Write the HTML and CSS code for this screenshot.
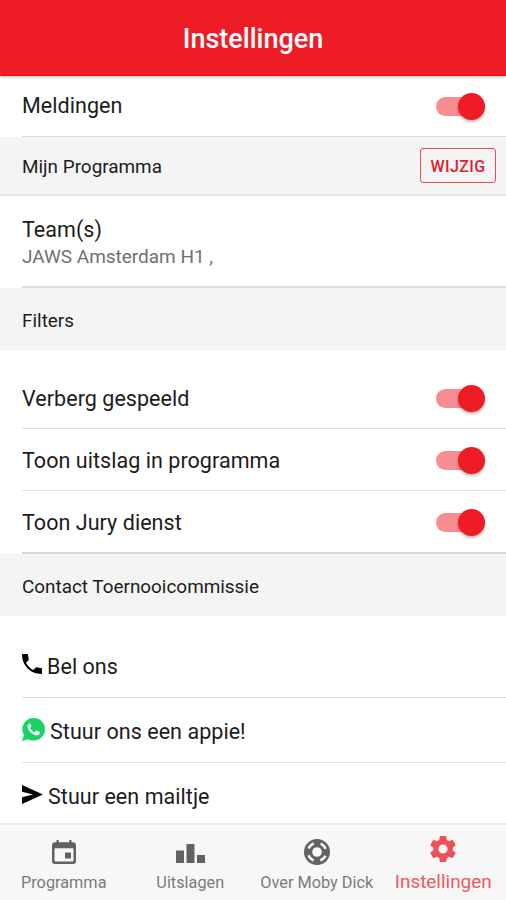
FILE: index.html
```html
<!DOCTYPE html>
<html lang="nl">
<head>
<meta charset="utf-8">
<title>Instellingen</title>
<link rel="stylesheet" href="styles.css">
</head>
<body>
<div class="app">
  <header class="header"><h1>Instellingen</h1></header>
  <main class="content">
    <div class="row first"><span>Meldingen</span><span class="toggle"></span></div>
    <div class="section mine"><span>Mijn Programma</span><button class="change">WIJZIG</button></div>
    <div class="row team"><div><div>Team(s)</div><div class="sub">JAWS Amsterdam H1 ,</div></div></div>
    <div class="section"><span>Filters</span></div>
    <div class="list filters">
      <div class="row"><span>Verberg gespeeld</span><span class="toggle"></span></div>
      <div class="row"><span>Toon uitslag in programma</span><span class="toggle"></span></div>
      <div class="row last"><span>Toon Jury dienst</span><span class="toggle"></span></div>
    </div>
    <div class="section contact"><span>Contact Toernooicommissie</span></div>
    <div class="list links">
      <div class="row"><svg class="phone" viewBox="3 3 18 18"><path d="M6.62 10.79c1.44 2.83 3.76 5.14 6.59 6.59l2.2-2.2c.27-.27.67-.36 1.02-.24 1.12.37 2.33.57 3.57.57.55 0 1 .45 1 1V20c0 .55-.45 1-1 1C10.61 21 3 13.39 3 4c0-.55.45-1 1-1h3.5c.55 0 1 .45 1 1 0 1.25.2 2.45.57 3.57.11.35.03.74-.25 1.02l-2.2 2.2z"/></svg><span>Bel ons</span></div>
      <div class="row"><svg class="whatsapp" viewBox="0 0 24 24"><path fill="#1bd263" d="M12.2 0A11.8 11.8 0 0 1 24 11.8 11.8 11.8 0 0 1 12.2 23.6c-2.1 0-4-.5-5.7-1.5L0 24l1.9-6.3A11.8 11.8 0 0 1 12.2 0z"/><path fill="#fff" d="M8.2 5.8c-.5 0-1 .2-1.4.7-.6.6-1.1 1.5-1 2.7.2 2 1.7 4.2 3.5 5.9 2 1.9 4.3 3 6.2 3 1.5-.1 2.7-.9 3-2 .2-.7.2-1.3 0-1.5l-3.1-1.5c-.4-.2-.7-.1-1 .3l-.9 1.2c-.2.3-.5.3-.9.1-1.7-.8-3.1-2.1-4-3.7-.2-.3-.1-.6.1-.8l.8-1.1c.2-.3.2-.5.1-.8L8.8 6.2c-.1-.3-.3-.4-.6-.4z"/></svg><span>Stuur ons een appie!</span></div>
      <div class="row"><svg class="send" viewBox="2 3 21 18" preserveAspectRatio="none"><path d="M2 21 23 12 2 3v6.500l11 2.500-11 2.500z"/></svg><span>Stuur een mailtje</span></div>
    </div>
  </main>
  <nav class="tabs">
    <div class="tab"><svg viewBox="0 0 26 26"><path fill-rule="evenodd" d="M5.500 1h2.200v2.200h10.600V1h2.200v2.200H22a3 3 0 0 1 3 3V22a3 3 0 0 1-3 3H4a3 3 0 0 1-3-3V6.200a3 3 0 0 1 3-3h1.500zM3.500 9.200v12.400a1 1 0 0 0 1 1h17a1 1 0 0 0 1-1V9.200zM14 13.500h6v6h-6z"/></svg><span>Programma</span></div>
    <div class="tab"><svg class="bars" viewBox="0 0 29 19"><path d="M0 6.500h8V19H0zM10.500 0h8v19h-8zM21 11h8v8h-8z"/></svg><span>Uitslagen</span></div>
    <div class="tab"><svg viewBox="0 0 26 26"><circle cx="13" cy="13" r="13"/><circle cx="13" cy="13" r="4.800" fill="#f7f7f7"/><circle cx="13" cy="13" r="9.100" fill="none" stroke="#f7f7f7" stroke-width="2.600" stroke-dasharray="7.400 6.894" stroke-dashoffset="3.700" transform="rotate(45 13 13)"/></svg><span>Over Moby Dick</span></div>
    <div class="tab active"><svg viewBox="2 2 20 20"><path d="M19.430 12.980c.04-.32.07-.64.07-.98s-.03-.66-.07-.98l2.110-1.650c.19-.15.24-.42.12-.64l-2-3.460c-.12-.22-.39-.3-.61-.22l-2.490 1c-.52-.4-1.080-.73-1.690-.98l-.38-2.650C14.460 2.180 14.250 2 14 2h-4c-.25 0-.46.18-.49.42l-.38 2.650c-.61.25-1.170.59-1.690.98l-2.490-1c-.23-.09-.49 0-.61.22l-2 3.460c-.13.22-.07.49.12.64l2.110 1.650c-.04.32-.07.65-.07.98s.03.66.07.98l-2.110 1.650c-.19.15-.24.42-.12.64l2 3.460c.12.22.39.3.61.22l2.490-1c.52.4 1.080.73 1.690.98l.38 2.650c.03.24.24.42.49.42h4c.25 0 .46-.18.49-.42l.38-2.650c.61-.25 1.170-.59 1.690-.98l2.490 1c.23.09.49 0 .61-.22l2-3.460c.12-.22.07-.49-.12-.64zM12 15.500a3.500 3.500 0 1 1 0-7 3.500 3.500 0 0 1 0 7z"/></svg><span>Instellingen</span></div>
  </nav>
</div>
</body>
</html>
```
FILE: styles.css
```css
* { box-sizing: border-box; }
body { margin: 0; background: #fff; font-family: Roboto, sans-serif; color: #1c1c1c; }
.app { display: flex; flex-direction: column; height: 900px; overflow: hidden; }
.header { flex: none; height: 76px; display: flex; align-items: center; justify-content: center; background: #ee1c25; border-bottom: 1px solid #e80d14; box-shadow: 0 1px 3px rgba(0,0,0,.3); z-index: 1; }
h1 { margin: 2px 0 0; font-size: 27px; line-height: 32px; font-weight: 500; color: #fff; }
.content { flex: 1; min-height: 0; overflow: hidden; }
.row { display: flex; align-items: center; height: 62px; margin-left: 22px; padding: 2px 21px 0 0; border-bottom: 1px solid #dedede; font-size: 21.500px; line-height: 26px; letter-spacing: .05px; }
.first { height: 61px; padding-top: 0; }
.toggle { display: block; position: relative; width: 49px; height: 19px; margin-left: auto; border-radius: 10px; background: linear-gradient(to right, #f58d92 42px, transparent 42px); }
.toggle::after { content: ""; position: absolute; right: 0; top: -4px; width: 27px; height: 27px; border-radius: 50%; background: #ee1c25; box-shadow: 0 2px 3px rgba(0,0,0,.28); }
.section { display: flex; align-items: center; height: 62px; padding: 4px 0 0 22px; background: #f4f4f4; font-size: 18.900px; line-height: 24px; }
.mine { height: 59px; padding: 0 10px 0 22px; border-bottom: 2px solid #e5e5e5; }
.mine span { padding-top: 2px; }
.change { margin: 0 0 0 auto; width: 76px; height: 35px; padding: 2px 0 0; border: 1px solid #e74b51; border-radius: 3px; background: transparent; color: #dc2329; font: 500 16px/31px Roboto, sans-serif; letter-spacing: .4px; }
.team { height: 92px; padding-top: 5px; border-bottom: 2px solid #dcdcdc; }
.sub { font-size: 19px; line-height: 27px; letter-spacing: -.02px; color: #707070; }
.filters { padding-top: 17px; }
.last { height: 63px; border-bottom: 2px solid #d6d6d6; }
.links { padding-top: 17px; }
.links .row { height: 65px; padding-top: 4px; }
.links svg { flex: none; fill: #050505; }
.phone { width: 20px; height: 20px; margin: -6px 5px 0 0; }
.whatsapp { width: 23px; height: 23px; margin: -6px 5px 0 0; }
.send { width: 21px; height: 19px; margin: -6px 5px 0 0; }
.tabs { flex: none; display: grid; grid-template-columns: repeat(4, 1fr); height: 77px; background: #f7f7f7; border-top: 2px solid #ebebeb; }
.tab { display: flex; flex-direction: column; align-items: center; padding: 14px 0 0 1px; color: #7b7b7b; font-size: 16.300px; line-height: 20px; white-space: nowrap; }
.tab svg { width: 26px; height: 26px; fill: #626262; flex: none; margin-bottom: 8px; }
.tab .bars { width: 29px; height: 19px; margin: 5px 0 10px; }
.active { padding-top: 11px; color: #ef5960; font-size: 18.900px; }
.active svg { fill: #ef5058; margin-bottom: 10px; }
```
